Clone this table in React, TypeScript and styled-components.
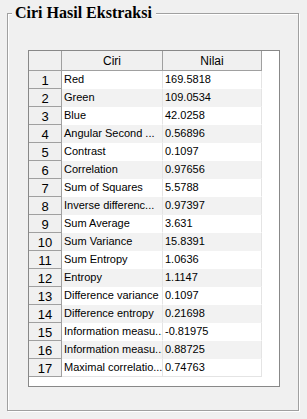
import React from "react";
import styled, { createGlobalStyle } from "styled-components";

const GlobalStyle = createGlobalStyle`
  html, body {
    margin: 0;
    padding: 0;
    background-color: #f0f0f0;
  }
  body {
    width: 307px;
    height: 419px;
    overflow: hidden;
  }
`;

const Frame = styled.fieldset`
  margin: 5px 0 0 7px;
  padding: 0;
  width: 290px;
  border: 1px solid #a0a0a0;
  box-shadow: 1px 1px 0 #ffffff, inset 1px 1px 0 #ffffff;
`;

const FrameTitle = styled.legend`
  margin-left: 4px;
  padding: 0 4px 0 3px;
  font-family: "Liberation Serif", serif;
  font-weight: bold;
  font-size: 16px;
  line-height: 16px;
  color: #000000;
  background-color: #f0f0f0;
`;

const FrameBody = styled.div`
  padding: 29px 18px 23px 20px;
`;

const Table = styled.div`
  width: 250px;
  height: 335px;
  border: 1px solid #888888;
  background-color: #ffffff;
`;

const HeaderRow = styled.div`
  display: grid;
  grid-template-columns: 33px 101px 99px;
  width: 233px;
  height: 20px;
`;

const HeaderCell = styled.div`
  box-sizing: border-box;
  background-color: #f0f0f0;
  border-right: 1px solid #a0a0a0;
  border-bottom: 1px solid #a0a0a0;
  padding-top: 1px;
  font-family: "Liberation Sans", Arial, sans-serif;
  font-size: 12px;
  line-height: 18px;
  text-align: center;
  color: #000000;
`;

const Row = styled.div<{ $alt: boolean }>`
  display: grid;
  grid-template-columns: 33px 101px 99px;
  width: 233px;
  height: 18px;
  background-color: ${(p) => (p.$alt ? "#f2f2f2" : "#ffffff")};
`;

const RowNumber = styled.div`
  box-sizing: border-box;
  background-color: #f0f0f0;
  border-right: 1px solid #a0a0a0;
  border-bottom: 1px solid #a0a0a0;
  padding-top: 2px;
  font-family: "Liberation Sans", Arial, sans-serif;
  font-size: 13px;
  line-height: 15px;
  text-align: center;
  color: #000000;
`;

const Cell = styled.div<{ $last: boolean }>`
  box-sizing: border-box;
  border-right: 1px solid #e4e4e4;
  border-bottom: 1px solid ${(p) => (p.$last ? "#e4e4e4" : "transparent")};
  padding-left: 2px;
  font-family: "Liberation Sans", Arial, sans-serif;
  font-size: 11px;
  line-height: 17px;
  color: #000000;
  white-space: nowrap;
  overflow: hidden;
`;

const features: [string, string][] = [
  ["Red", "169.5818"],
  ["Green", "109.0534"],
  ["Blue", "42.0258"],
  ["Angular Second ...", "0.56896"],
  ["Contrast", "0.1097"],
  ["Correlation", "0.97656"],
  ["Sum of Squares", "5.5788"],
  ["Inverse differenc...", "0.97397"],
  ["Sum Average", "3.631"],
  ["Sum Variance", "15.8391"],
  ["Sum Entropy", "1.0636"],
  ["Entropy", "1.1147"],
  ["Difference variance", "0.1097"],
  ["Difference entropy", "0.21698"],
  ["Information measu...", "-0.81975"],
  ["Information measu...", "0.88725"],
  ["Maximal correlatio...", "0.74763"],
];

export default function App() {
  return (
    <>
      <GlobalStyle />
      <Frame>
        <FrameTitle>Ciri Hasil Ekstraksi</FrameTitle>
        <FrameBody>
          <Table>
            <HeaderRow>
              <HeaderCell />
              <HeaderCell>Ciri</HeaderCell>
              <HeaderCell>Nilai</HeaderCell>
            </HeaderRow>
            {features.map(([name, value], i) => {
              const last = i === features.length - 1;
              return (
                <Row key={i} $alt={i % 2 === 1}>
                  <RowNumber>{i + 1}</RowNumber>
                  <Cell $last={last}>{name}</Cell>
                  <Cell $last={last}>{value}</Cell>
                </Row>
              );
            })}
          </Table>
        </FrameBody>
      </Frame>
    </>
  );
}
